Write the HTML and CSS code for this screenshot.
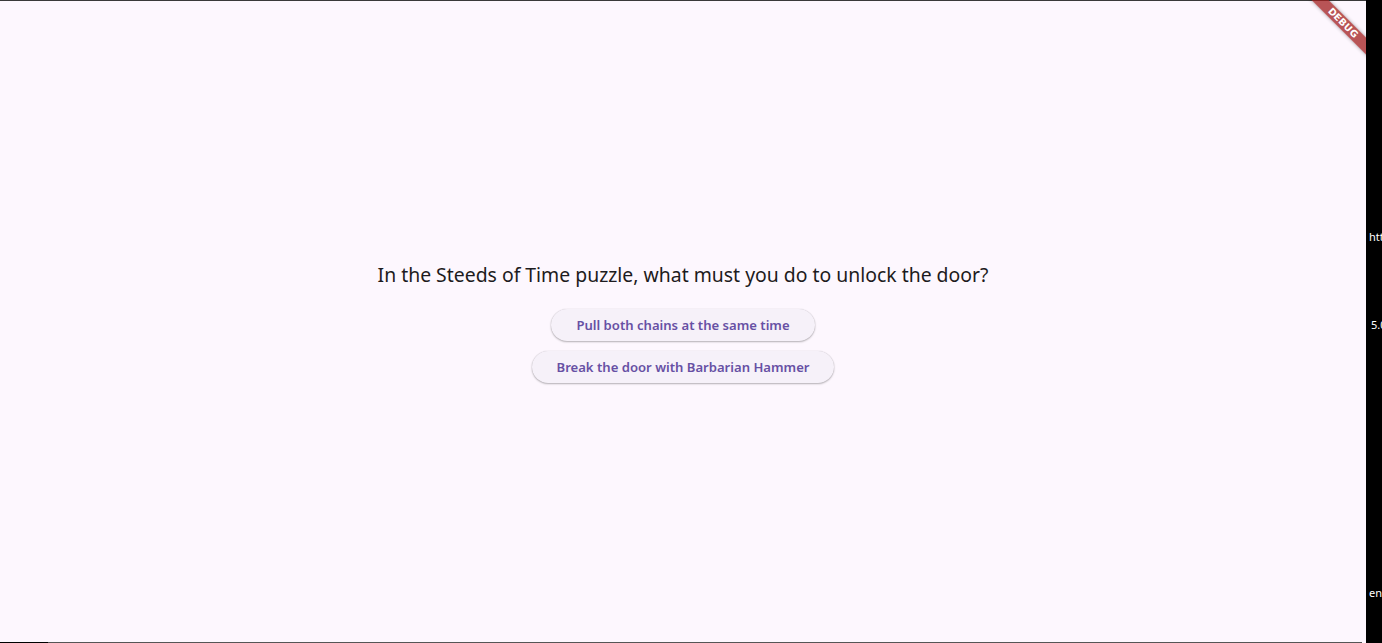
FILE: index.html
```html
<!DOCTYPE html>
<html>
<head>
<meta charset="utf-8">
<link rel="stylesheet" href="styles.css">
</head>
<body>
<div class="screen">
  <div class="app">
    <div class="topline"></div>
    <main class="content">
      <p class="question">In the Steeds of Time puzzle, what must you do to unlock the door?</p>
      <button class="answer">Pull both chains at the same time</button>
      <button class="answer">Break the door with Barbarian Hammer</button>
    </main>
    <div class="bottomline"><span class="seg-dark"></span><span class="seg-gray"></span></div>
    <div class="banner"><span>DEBUG</span></div>
  </div>
  <aside class="side">
    <span class="side-text t1">https</span>
    <span class="side-text t2">5.0</span>
    <span class="side-text t3">en</span>
  </aside>
</div>
</body>
</html>
```

FILE: styles.css
```css
html, body {
  margin: 0;
  padding: 0;
  background: #000;
}
.screen {
  display: flex;
  width: 1382px;
  height: 643px;
  overflow: hidden;
}
.app {
  position: relative;
  width: 1366px;
  height: 643px;
  background: #fdf7fe;
  display: flex;
  flex-direction: column;
  overflow: hidden;
}
.topline {
  height: 1px;
  background: #3a3a3a;
  flex: none;
}
.content {
  flex: 1;
  display: flex;
  flex-direction: column;
  align-items: center;
  justify-content: center;
  padding-top: 1px;
}
.question {
  margin: 0 0 20px 0;
  font-family: "Noto Sans", "Open Sans", sans-serif;
  font-size: 19.4px;
  line-height: 28px;
  color: #1d1b20;
}
.answer {
  font-family: "Noto Sans", "Open Sans", sans-serif;
  font-weight: 600;
  font-size: 13.1px;
  color: #6750a4;
  background: #f6f1f9;
  border: none;
  border-radius: 16px;
  height: 32px;
  padding: 0 25px;
  margin: 0 0 10px 0;
  box-shadow: 0 1px 2px rgba(0,0,0,0.28), 0 0 1px rgba(0,0,0,0.2);
  cursor: pointer;
}
.answer:last-child {
  margin-bottom: 0;
}
.bottomline {
  height: 1px;
  display: flex;
  flex: none;
}
.seg-dark {
  width: 48px;
  background: #000;
}
.seg-gray {
  width: 1314px;
  background: #555;
}
.banner {
  position: absolute;
  top: 17px;
  left: 1283px;
  width: 120px;
  height: 12px;
  background: rgba(160, 30, 30, 0.75);
  transform: rotate(45deg);
  box-shadow: 0 0 4px rgba(0,0,0,0.35);
  display: flex;
  align-items: center;
  justify-content: center;
}
.banner span {
  font-family: "DejaVu Sans", sans-serif;
  font-weight: 900;
  font-size: 9.5px;
  line-height: 10px;
  color: #fff;
  letter-spacing: 0.2px;
}
.side {
  width: 16px;
  height: 643px;
  background: #000;
  display: flex;
  flex-direction: column;
  padding-left: 3px;
  overflow: hidden;
  box-sizing: border-box;
}
.side-text {
  font-family: "Noto Sans", sans-serif;
  font-size: 11px;
  line-height: 14px;
  color: #fff;
  white-space: nowrap;
}
.t1 { margin-top: 230px; }
.t2 { margin-top: 74px; padding-left: 2px; }
.t3 { margin-top: 254px; }
```
